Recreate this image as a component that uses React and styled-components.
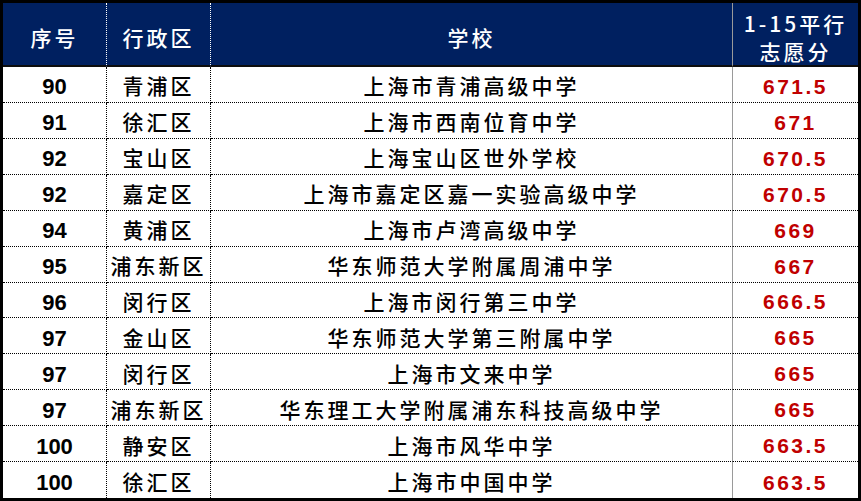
import React from "react"
import styled, { createGlobalStyle } from "styled-components"

const GlobalStyle = createGlobalStyle`
  html, body {
    margin: 0;
    padding: 0;
    background: #ffffff;
  }
`

const rows = [
  ["90", "青浦区", "上海市青浦高级中学", "671.5"],
  ["91", "徐汇区", "上海市西南位育中学", "671"],
  ["92", "宝山区", "上海宝山区世外学校", "670.5"],
  ["92", "嘉定区", "上海市嘉定区嘉一实验高级中学", "670.5"],
  ["94", "黄浦区", "上海市卢湾高级中学", "669"],
  ["95", "浦东新区", "华东师范大学附属周浦中学", "667"],
  ["96", "闵行区", "上海市闵行第三中学", "666.5"],
  ["97", "金山区", "华东师范大学第三附属中学", "665"],
  ["97", "闵行区", "上海市文来中学", "665"],
  ["97", "浦东新区", "华东理工大学附属浦东科技高级中学", "665"],
  ["100", "静安区", "上海市风华中学", "663.5"],
  ["100", "徐汇区", "上海市中国中学", "663.5"],
]

const Sheet = styled.div`
  box-sizing: border-box;
  width: 861px;
  height: 501px;
  border: 3px solid #000;
  display: grid;
  grid-template-columns: 104px 104px 522px 1fr;
  grid-template-rows: 64px repeat(12, 1fr);
  font-family: "Noto Sans CJK SC", "Liberation Sans", sans-serif;
`

const HeadCell = styled.div`
  box-sizing: border-box;
  background: #002060;
  color: #ffffff;
  display: flex;
  flex-direction: column;
  align-items: center;
  justify-content: center;
  padding-top: 5px;
  font-size: 21px;
  font-weight: 500;
  letter-spacing: 3px;
  line-height: 28px;
  text-align: center;
  border-bottom: 2px solid #0d0d0d;
  border-right: ${(p) =>
    p.$last ? "none" : p.$solid ? "1px solid #9a9a9a" : "1px dotted #ffffff"};
`

const Cell = styled.div`
  box-sizing: border-box;
  display: flex;
  align-items: center;
  justify-content: center;
  padding-top: 2px;
  font-size: 21px;
  font-weight: 500;
  letter-spacing: 3px;
  color: #000;
  border-bottom: ${(p) => (p.$lastRow ? "none" : "1px dotted #000")};
  border-right: ${(p) =>
    p.$last ? "none" : p.$solid ? "1px solid #9a9a9a" : "1px dotted #000"};
`

const Num = styled(Cell)`
  padding-top: 6px;
  font-family: "Liberation Sans", Arial, sans-serif;
  font-weight: 700;
  letter-spacing: 0;
  font-size: 22px;
`

const Score = styled(Cell)`
  padding-top: 5px;
  font-family: "Liberation Sans", Arial, sans-serif;
  font-weight: 700;
  color: #c00000;
  font-size: 21px;
  letter-spacing: 2.5px;
`

export default function App() {
  return (
    <>
      <GlobalStyle />
      <Sheet>
        <HeadCell>序号</HeadCell>
        <HeadCell>行政区</HeadCell>
        <HeadCell $solid>学校</HeadCell>
        <HeadCell $last>
          <span>1-15平行</span>
          <span>志愿分</span>
        </HeadCell>
        {rows.map((r, i) => {
          const lastRow = i === rows.length - 1
          return (
            <React.Fragment key={i}>
              <Num $lastRow={lastRow}>{r[0]}</Num>
              <Cell $lastRow={lastRow}>{r[1]}</Cell>
              <Cell $lastRow={lastRow} $solid>
                {r[2]}
              </Cell>
              <Score $lastRow={lastRow} $last>
                {r[3]}
              </Score>
            </React.Fragment>
          )
        })}
      </Sheet>
    </>
  )
}
